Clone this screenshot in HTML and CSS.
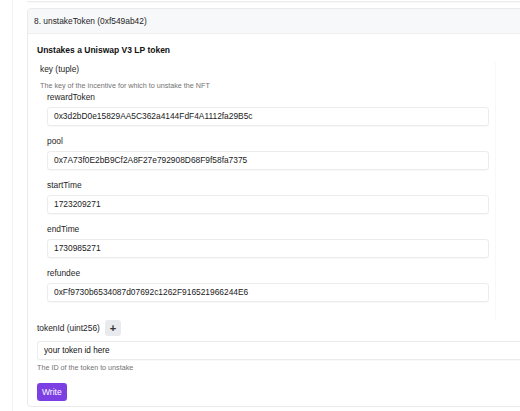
FILE: index.html
```html
<!DOCTYPE html>
<html>
<head>
<meta charset="utf-8">
<link rel="stylesheet" href="styles.css">
</head>
<body>
<div class="page">
  <div class="prev"></div>
  <div class="card">
    <div class="card-header">8. unstakeToken (0xf549ab42)</div>
    <div class="card-body">
      <div class="title">Unstakes a Uniswap V3 LP token</div>
      <div class="tuple">
        <div class="tuple-label">key (tuple)</div>
        <div class="desc">The key of the incentive for which to unstake the NFT</div>
        <div class="fields">
          <div class="field">
            <div class="field-label">rewardToken</div>
            <div class="input">0x3d2bD0e15829AA5C362a4144FdF4A1112fa29B5c</div>
          </div>
          <div class="field">
            <div class="field-label">pool</div>
            <div class="input">0x7A73f0E2bB9Cf2A8F27e792908D68F9f58fa7375</div>
          </div>
          <div class="field">
            <div class="field-label">startTime</div>
            <div class="input">1723209271</div>
          </div>
          <div class="field">
            <div class="field-label">endTime</div>
            <div class="input">1730985271</div>
          </div>
          <div class="field">
            <div class="field-label">refundee</div>
            <div class="input">0xFf9730b6534087d07692c1262F916521966244E6</div>
          </div>
        </div>
      </div>
      <div class="param-row">
        <span class="param-label">tokenId (uint256)</span>
        <span class="plus">+</span>
      </div>
      <div class="input wide">your token id here</div>
      <div class="desc small">The ID of the token to unstake</div>
      <button class="write">Write</button>
    </div>
  </div>
</div>
</body>
</html>
```
FILE: styles.css
```css
html, body {
  margin: 0;
  padding: 0;
  background: #ffffff;
  overflow: hidden;
}
body {
  font-family: "Liberation Sans", Arial, sans-serif;
  color: #222;
  width: 520px;
  height: 411px;
}
.page {
  margin-left: 12px;
  border-left: 1px solid #f2f2f2;
  height: 411px;
  padding-left: 14px;
}
.prev {
  height: 1px;
  border-bottom: 1px solid #ececec;
  box-shadow: 0 1px 2px rgba(0,0,0,0.04);
  margin-right: -20px;
}
.card {
  margin-top: 6px;
  width: 520px;
  border: 1px solid #ebebeb;
  border-radius: 4px;
  height: 399px;
  box-sizing: border-box;
}
.card-header {
  height: 24px;
  line-height: 24px;
  background: #f7f8fa;
  border-bottom: 1px solid #efefef;
  padding-left: 6px;
  font-size: 8.4px;
  color: #1e1e1e;
  border-radius: 4px 4px 0 0;
}
.card-body {
  padding: 9px 9px 0 9px;
}
.title {
  font-weight: bold;
  font-size: 8.5px;
  line-height: 14px;
  color: #111;
}
.tuple {
  margin-top: 5px;
  padding-left: 3px;
  width: 455px;
  border-right: 1px solid #f8f8f8;
  padding-bottom: 18px;
}
.tuple-label {
  font-size: 8.4px;
  line-height: 14px;
  color: #1e1e1e;
}
.desc {
  margin-top: 4px;
  font-size: 7.2px;
  line-height: 11px;
  color: #737373;
}
.fields {
  padding-left: 7px;
  padding-right: 6px;
  margin-top: 0;
}
.field {
  margin-bottom: 9px;
}
.field:last-child {
  margin-bottom: 0;
}
.field-label {
  font-size: 8.4px;
  line-height: 12px;
  color: #1e1e1e;
  margin-bottom: 4px;
}
.input {
  height: 19px;
  box-sizing: border-box;
  border: 1px solid #ececec;
  border-radius: 3px;
  box-shadow: 0 1px 1px rgba(0,0,0,0.03);
  padding-left: 6px;
  font-size: 8.4px;
  line-height: 17px;
  color: #1a1a1a;
  background: #fff;
}
.param-row {
  display: flex;
  align-items: center;
  gap: 5px;
  height: 16px;
}
.param-label {
  font-size: 8.4px;
  color: #1e1e1e;
}
.plus {
  width: 16px;
  height: 16px;
  border-radius: 3px;
  background: #e8eaee;
  display: flex;
  align-items: center;
  justify-content: center;
  font-size: 11px;
  color: #333;
  font-weight: bold;
}
.input.wide {
  margin-top: 5px;
  width: 500px;
  font-size: 8.2px;
  color: #111;
}
.desc.small {
  margin-top: 2px;
}
.write {
  margin-top: 10px;
  height: 18px;
  padding: 0 5px;
  border: none;
  border-radius: 3px;
  background: #7b3fe4;
  color: #fff;
  font-family: "Liberation Sans", Arial, sans-serif;
  font-size: 8.5px;
  display: block;
}
```
